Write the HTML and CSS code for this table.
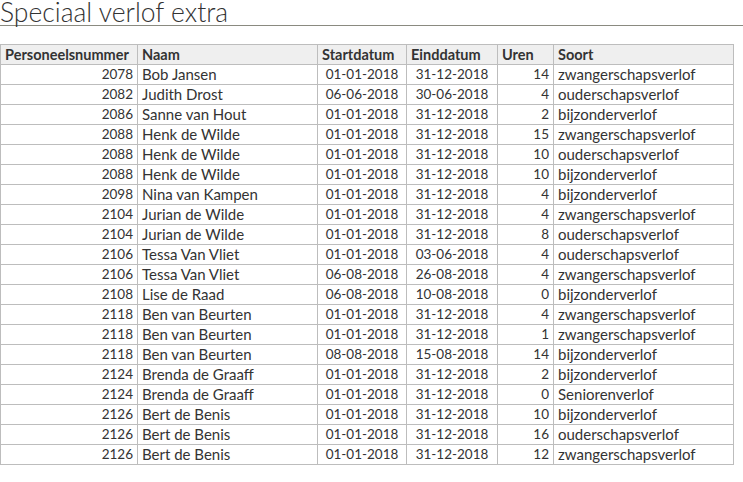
FILE: index.html
```html
<!DOCTYPE html>
<html>
<head>
<meta charset="utf-8">
<link rel="stylesheet" href="styles.css">
</head>
<body>
<h1 class="title">Speciaal verlof extra</h1>
<table class="grid">
<colgroup>
<col class="c-nr"><col class="c-naam"><col class="c-start"><col class="c-eind"><col class="c-uren"><col class="c-soort">
</colgroup>
<thead>
<tr><th>Personeelsnummer</th><th>Naam</th><th>Startdatum</th><th>Einddatum</th><th>Uren</th><th>Soort</th></tr>
</thead>
<tbody>
<tr><td class="num">2078</td><td>Bob Jansen</td><td class="date">01-01-2018</td><td class="date">31-12-2018</td><td class="num">14</td><td>zwangerschapsverlof</td></tr>
<tr><td class="num">2082</td><td>Judith Drost</td><td class="date">06-06-2018</td><td class="date">30-06-2018</td><td class="num">4</td><td>ouderschapsverlof</td></tr>
<tr><td class="num">2086</td><td>Sanne van Hout</td><td class="date">01-01-2018</td><td class="date">31-12-2018</td><td class="num">2</td><td>bijzonderverlof</td></tr>
<tr><td class="num">2088</td><td>Henk de Wilde</td><td class="date">01-01-2018</td><td class="date">31-12-2018</td><td class="num">15</td><td>zwangerschapsverlof</td></tr>
<tr><td class="num">2088</td><td>Henk de Wilde</td><td class="date">01-01-2018</td><td class="date">31-12-2018</td><td class="num">10</td><td>ouderschapsverlof</td></tr>
<tr><td class="num">2088</td><td>Henk de Wilde</td><td class="date">01-01-2018</td><td class="date">31-12-2018</td><td class="num">10</td><td>bijzonderverlof</td></tr>
<tr><td class="num">2098</td><td>Nina van Kampen</td><td class="date">01-01-2018</td><td class="date">31-12-2018</td><td class="num">4</td><td>bijzonderverlof</td></tr>
<tr><td class="num">2104</td><td>Jurian de Wilde</td><td class="date">01-01-2018</td><td class="date">31-12-2018</td><td class="num">4</td><td>zwangerschapsverlof</td></tr>
<tr><td class="num">2104</td><td>Jurian de Wilde</td><td class="date">01-01-2018</td><td class="date">31-12-2018</td><td class="num">8</td><td>ouderschapsverlof</td></tr>
<tr><td class="num">2106</td><td>Tessa Van Vliet</td><td class="date">01-01-2018</td><td class="date">03-06-2018</td><td class="num">4</td><td>ouderschapsverlof</td></tr>
<tr><td class="num">2106</td><td>Tessa Van Vliet</td><td class="date">06-08-2018</td><td class="date">26-08-2018</td><td class="num">4</td><td>zwangerschapsverlof</td></tr>
<tr><td class="num">2108</td><td>Lise de Raad</td><td class="date">06-08-2018</td><td class="date">10-08-2018</td><td class="num">0</td><td>bijzonderverlof</td></tr>
<tr><td class="num">2118</td><td>Ben van Beurten</td><td class="date">01-01-2018</td><td class="date">31-12-2018</td><td class="num">4</td><td>zwangerschapsverlof</td></tr>
<tr><td class="num">2118</td><td>Ben van Beurten</td><td class="date">01-01-2018</td><td class="date">31-12-2018</td><td class="num">1</td><td>zwangerschapsverlof</td></tr>
<tr><td class="num">2118</td><td>Ben van Beurten</td><td class="date">08-08-2018</td><td class="date">15-08-2018</td><td class="num">14</td><td>bijzonderverlof</td></tr>
<tr><td class="num">2124</td><td>Brenda de Graaff</td><td class="date">01-01-2018</td><td class="date">31-12-2018</td><td class="num">2</td><td>bijzonderverlof</td></tr>
<tr><td class="num">2124</td><td>Brenda de Graaff</td><td class="date">01-01-2018</td><td class="date">31-12-2018</td><td class="num">0</td><td>Seniorenverlof</td></tr>
<tr><td class="num">2126</td><td>Bert de Benis</td><td class="date">01-01-2018</td><td class="date">31-12-2018</td><td class="num">10</td><td>bijzonderverlof</td></tr>
<tr><td class="num">2126</td><td>Bert de Benis</td><td class="date">01-01-2018</td><td class="date">31-12-2018</td><td class="num">16</td><td>ouderschapsverlof</td></tr>
<tr><td class="num">2126</td><td>Bert de Benis</td><td class="date">01-01-2018</td><td class="date">31-12-2018</td><td class="num">12</td><td>zwangerschapsverlof</td></tr>
</tbody>
</table>
</body>
</html>
```
FILE: styles.css
```css
html, body {
  margin: 0;
  padding: 0;
  background: #fff;
}
body {
  font-family: Lato, "Open Sans", sans-serif;
  color: #333;
  font-size: 15px;
}
.title {
  margin: 0 0 18px 0;
  font-size: 26.5px;
  font-weight: 300;
  line-height: 25px;
  border-bottom: 1px solid #8a8a80;
  color: #333;
}
.grid {
  border-collapse: collapse;
  table-layout: fixed;
  width: 733px;
}
.c-nr { width: 137px; }
.c-naam { width: 180px; }
.c-start { width: 89px; }
.c-eind { width: 91px; }
.c-uren { width: 56px; }
.c-soort { width: 180px; }
.grid th, .grid td {
  border: 1px solid #bdbdbd;
  padding: 0 4px;
  height: 19px;
  line-height: 19px;
  white-space: nowrap;
  overflow: hidden;
}
.grid th {
  background: #efefef;
  font-weight: 700;
  font-size: 14.5px;
  text-align: left;
}
.grid td.num {
  text-align: right;
  font-size: 13.5px;
}
.grid td.date {
  text-align: center;
  font-size: 13.5px;
}
```
